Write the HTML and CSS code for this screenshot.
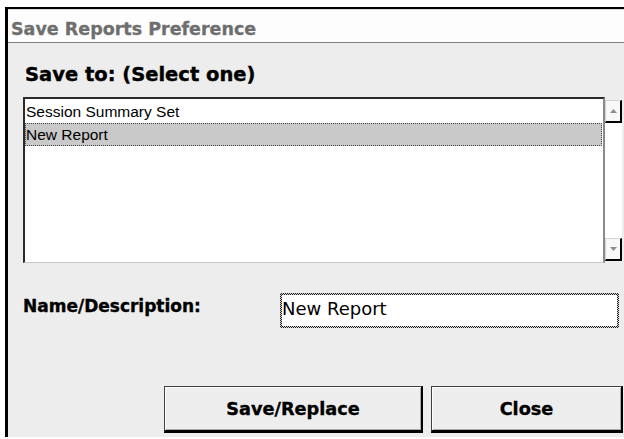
FILE: index.html
```html
<!DOCTYPE html>
<html lang="en">
<head>
<meta charset="utf-8">
<title>Save Reports Preference</title>
<link rel="stylesheet" href="styles.css">
</head>
<body>
<div class="window">
  <div class="titlebar">Save Reports Preference</div>
  <div class="panel">
    <h2 class="section-label">Save to: (Select one)</h2>
    <div class="listbox">
      <ul class="list">
        <li class="item">Session Summary Set</li>
        <li class="item selected">New Report</li>
      </ul>
      <div class="scrollbar">
        <div class="scroll-btn">
          <svg width="7" height="4" viewBox="0 0 7 4"><polygon points="3.5,0 7,4 0,4" fill="#8c8c8c"/></svg>
        </div>
        <div class="track"></div>
        <div class="scroll-btn">
          <svg width="7" height="4" viewBox="0 0 7 4"><polygon points="0,0 7,0 3.5,4" fill="#8c8c8c"/></svg>
        </div>
      </div>
    </div>
    <div class="field-row">
      <label class="field-label">Name/Description:</label>
      <div class="textbox">New Report</div>
    </div>
    <div class="button-row">
      <button class="btn btn-save">Save/Replace</button>
      <button class="btn btn-close">Close</button>
    </div>
  </div>
</div>
</body>
</html>
```
FILE: styles.css
```css
html, body {
  margin: 0;
  height: 100%;
  overflow: hidden;
  background: #ffffff;
}

.window {
  margin: 7px 0 0 5px;
  border-left: 3px solid #000;
  border-top: 2px solid #000;
  height: calc(100% - 9px);
  background: #ededed;
  box-sizing: border-box;
}

.titlebar {
  box-sizing: border-box;
  height: 34px;
  padding: 9px 0 0 3px;
  border-top: 1px solid #dcdcdc;
  border-bottom: 1px solid #808080;
  background: #fdfdfd;
  color: #6e6e6e;
  font: bold 17.5px/20px "DejaVu Sans", sans-serif;
  -webkit-text-stroke: 0.3px #6e6e6e;
  white-space: nowrap;
}

.panel {
  padding: 20px 0 0 15px;
  display: flex;
  flex-direction: column;
}

.section-label {
  margin: 0 0 11px;
  padding-left: 2px;
  font: bold 19.5px/23px "DejaVu Sans", sans-serif;
  -webkit-text-stroke: 0.4px #000;
  color: #000;
}

/* list box with its vertical scroll bar */
.listbox {
  display: flex;
  width: 599px;
  height: 166px;
}

.list {
  flex: 1;
  margin: 0;
  padding: 1px 0 0;
  list-style: none;
  box-sizing: border-box;
  background: #fff;
  border-top: 2px solid #2a2a2a;
  border-left: 2px solid #2a2a2a;
  border-right: 2px solid #8a8a8a;
  border-bottom: 1px solid #c6c6c6;
}

.item {
  box-sizing: border-box;
  height: 23px;
  line-height: 23px;
  padding-left: 1px;
  font-size: 15.5px;
  font-family: "Liberation Sans", Arial, sans-serif;
  color: #000;
  white-space: nowrap;
}

.item.selected {
  margin-right: 1px;
  line-height: 21px;
  padding-left: 0;
  background: #c9c9c9;
  border: 1px dotted #444;
}

.scrollbar {
  width: 17px;
  margin: 3px 0 2px;
  display: flex;
  flex-direction: column;
  background: #fff;
}

.track {
  flex: 1;
}

.scroll-btn {
  box-sizing: border-box;
  height: 23px;
  display: flex;
  align-items: center;
  justify-content: center;
  background: #f8f8f8;
  border-top: 1px solid #d4d4d4;
  border-left: 1px solid #d4d4d4;
  border-right: 2px solid #000;
  border-bottom: 2px solid #000;
}

/* name / description field */
.field-row {
  display: flex;
  margin-top: 30px;
}

.field-label {
  box-sizing: border-box;
  width: 257px;
  padding-top: 3px;
  font: bold 17px/20px "DejaVu Sans", sans-serif;
  -webkit-text-stroke: 0.35px #000;
  color: #000;
}

.textbox {
  box-sizing: border-box;
  width: 339px;
  height: 35px;
  padding-top: 4px;
  border: 2px solid transparent;
  background:
    linear-gradient(#fff, #fff) padding-box,
    repeating-conic-gradient(#1a1a1a 0 25%, #d8d8d8 0 50%) 0 0 / 2px 2px border-box;
  font: 18px/20px "DejaVu Sans", sans-serif;
  color: #000;
  white-space: nowrap;
}

/* command buttons */
.button-row {
  display: flex;
  gap: 8px;
  margin-top: 58px;
  padding-left: 141px;
}

.btn {
  box-sizing: border-box;
  height: 47px;
  padding: 0;
  background: #ededed;
  color: #000;
  font: bold 17.7px "DejaVu Sans", sans-serif;
  -webkit-text-stroke: 0.35px #000;
  border-top: 1px solid #404040;
  border-left: 1px solid #404040;
  border-right: 2px solid #000;
  border-bottom: 3px solid #000;
  box-shadow: inset 1px 1px 0 #fff, inset -1px -1px 0 #a8a8a8;
}

.btn-save {
  width: 259px;
}

.btn-close {
  width: 192px;
}
```
